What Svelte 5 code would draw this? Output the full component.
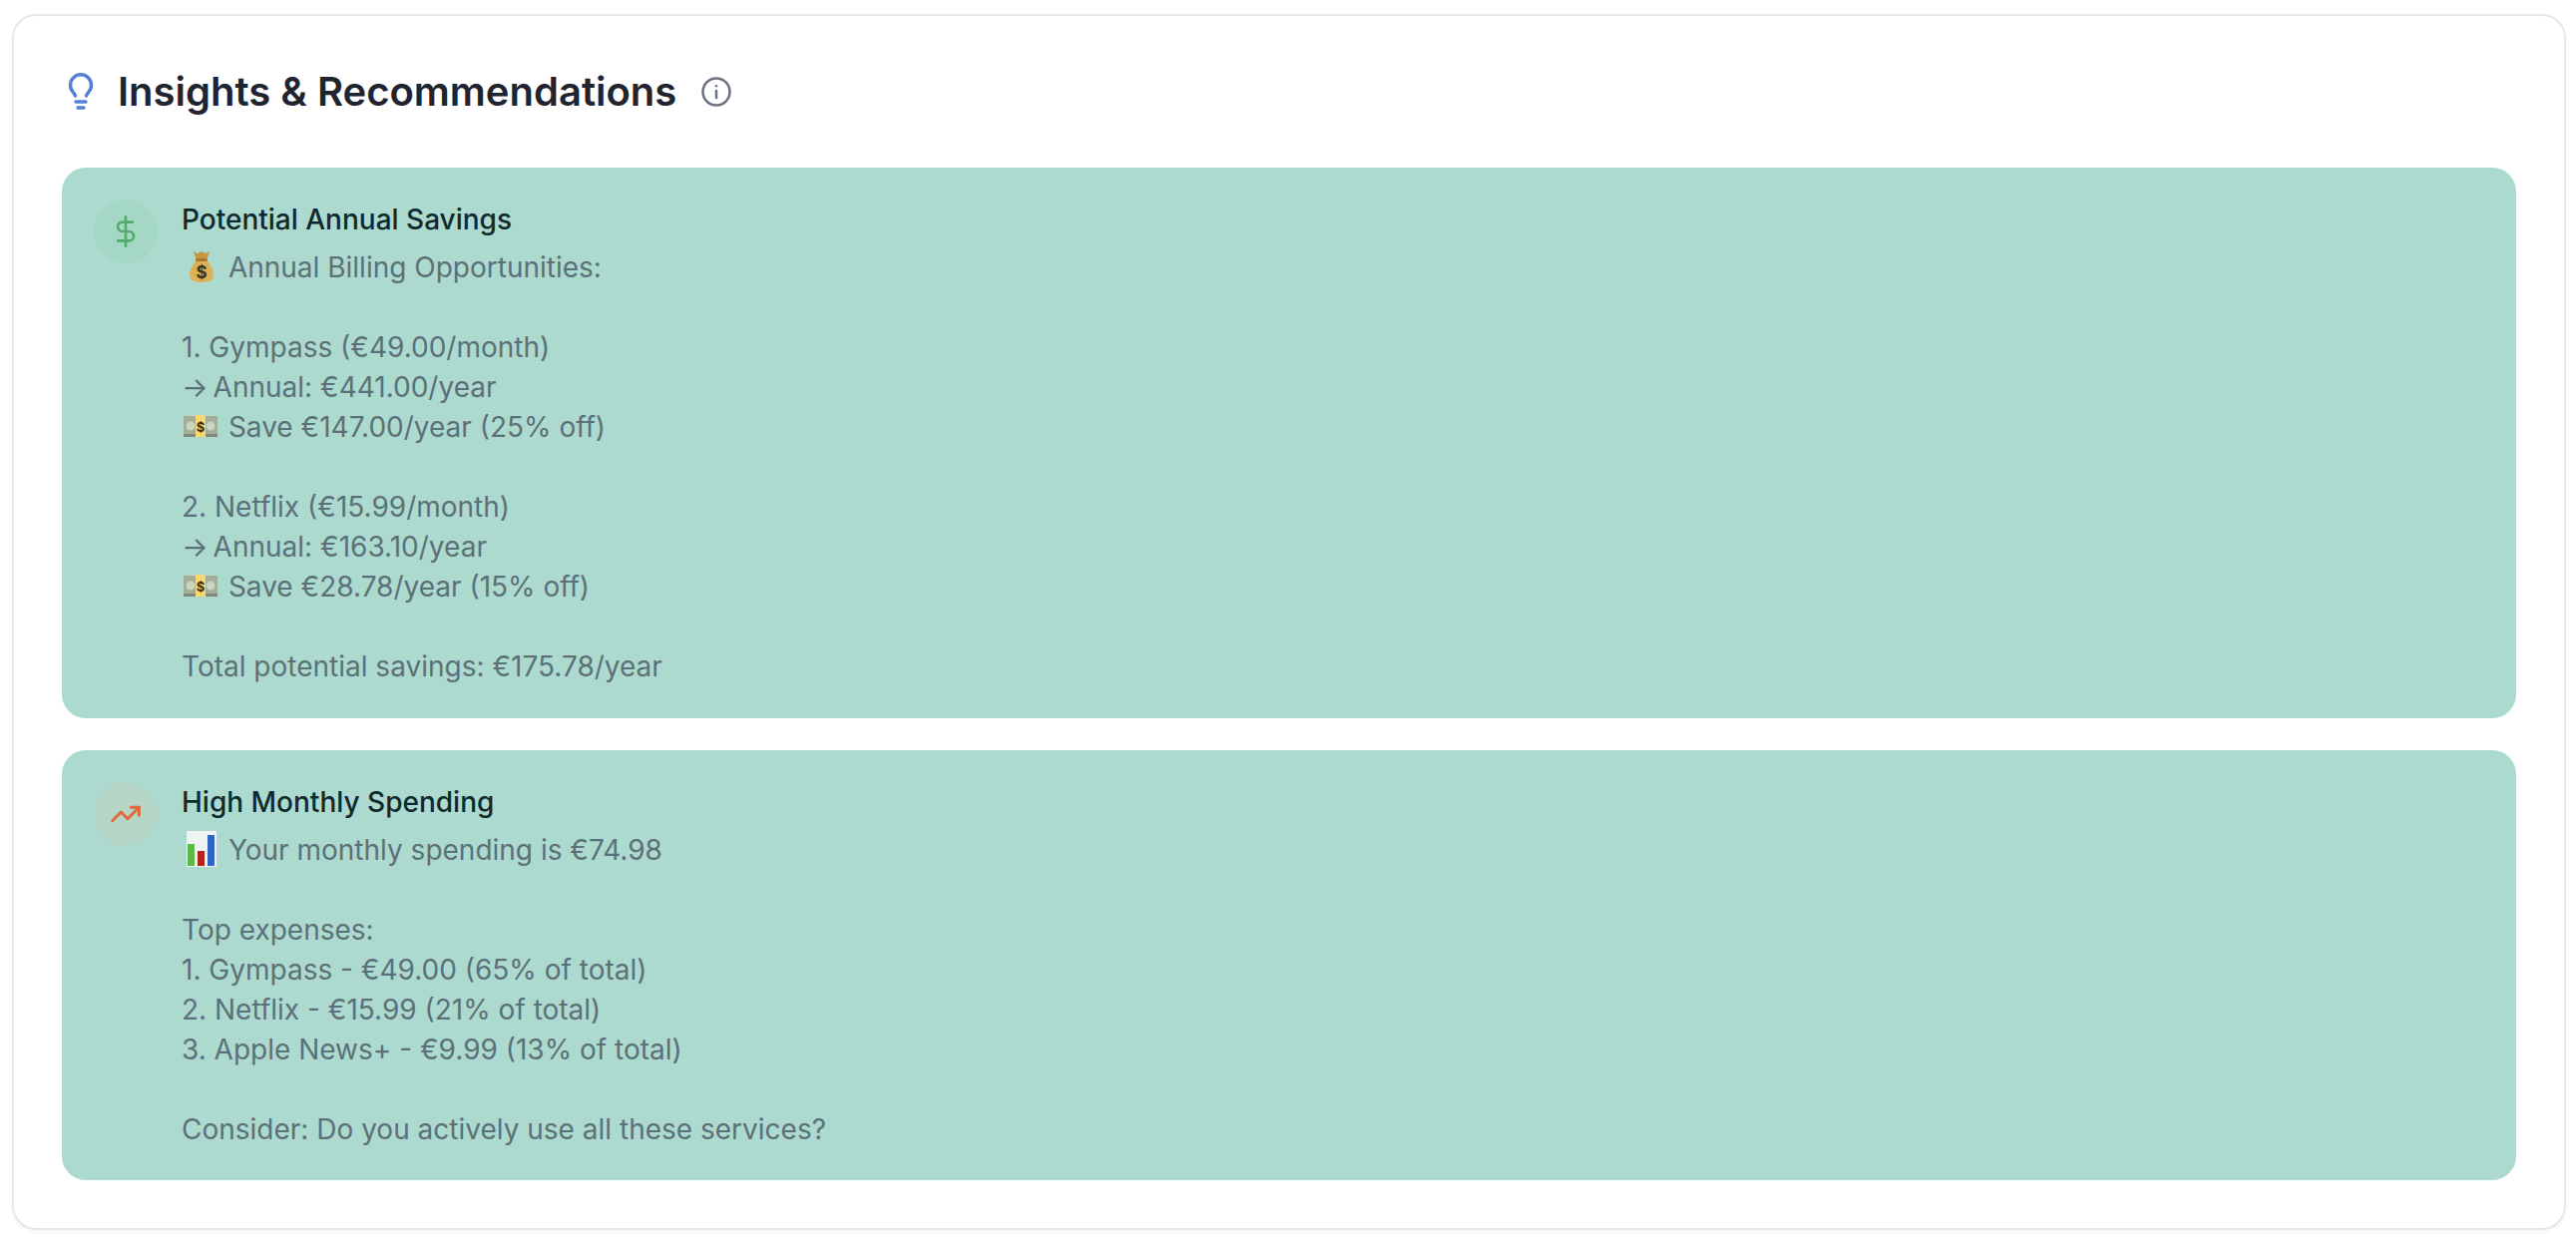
<script lang="ts">
	const insights = [
		{
			title: 'Potential Annual Savings',
			kind: 'savings',
			lines: [
				{ emoji: 'bag', text: 'Annual Billing Opportunities:' },
				{ text: '' },
				{ text: '1. Gympass (€49.00/month)' },
				{ arrow: true, text: 'Annual: €441.00/year' },
				{ emoji: 'note', text: 'Save €147.00/year (25% off)' },
				{ text: '' },
				{ text: '2. Netflix (€15.99/month)' },
				{ arrow: true, text: 'Annual: €163.10/year' },
				{ emoji: 'note', text: 'Save €28.78/year (15% off)' },
				{ text: '' },
				{ text: 'Total potential savings: €175.78/year' }
			]
		},
		{
			title: 'High Monthly Spending',
			kind: 'spending',
			lines: [
				{ emoji: 'chart', text: 'Your monthly spending is €74.98' },
				{ text: '' },
				{ text: 'Top expenses:' },
				{ text: '1. Gympass - €49.00 (65% of total)' },
				{ text: '2. Netflix - €15.99 (21% of total)' },
				{ text: '3. Apple News+ - €9.99 (13% of total)' },
				{ text: '' },
				{ text: 'Consider: Do you actively use all these services?' }
			]
		}
	];
</script>

{#snippet emoji(name: string)}
	<svg class="emoji" viewBox="0 0 39 40" aria-hidden="true">
		{#if name === 'bag'}
			<path d="M12 4l4 2 4-2 4 2 4-2-3 9h-10z" fill="#c9953f" />
			<path d="M14 13h12c1 3 6 8 6 14 0 6-4 8-12 8S8 33 8 27c0-6 5-11 6-14z" fill="#deb056" />
			<rect x="14" y="11" width="12" height="3" rx="1.500" fill="#a9762c" />
			<text x="20" y="31" text-anchor="middle" class="sign" font-size="17">$</text>
		{:else if name === 'note'}
			<rect x="2" y="9" width="34" height="20" fill="#a3ad98" />
			<rect x="2" y="27" width="34" height="3" fill="#7f8b78" />
			<circle cx="9" cy="19" r="4.500" fill="#ccd4c4" />
			<circle cx="29" cy="19" r="4.500" fill="#ccd4c4" />
			<rect x="14" y="8" width="10" height="22" fill="#f4d873" />
			<text x="19" y="24.500" text-anchor="middle" class="sign" font-size="13">$</text>
		{:else}
			<rect x="5" y="1" width="30" height="36" fill="#eef2f1" />
			<rect x="6" y="14" width="7" height="22" fill="#5cb947" />
			<rect x="16" y="21" width="7" height="15" fill="#b5241c" />
			<rect x="26" y="5" width="7" height="31" fill="#2f66c4" />
		{/if}
	</svg>
{/snippet}

<div class="page">
	<section class="panel">
		<header class="head">
			<svg class="bulb" viewBox="0 0 30 40" fill="none" stroke="currentColor" stroke-width="3.500" stroke-linecap="round" stroke-linejoin="round" aria-hidden="true">
				<path d="M9.500 24c-.4-1.800-1.300-2.800-2.400-3.800A10.500 10.500 0 1 1 22.900 20.200C21.800 21.200 20.900 22.200 20.500 24" />
				<path d="M10 30h10" />
				<path d="M12 36h6" />
			</svg>
			<h2>Insights &amp; Recommendations</h2>
			<svg class="info" viewBox="0 0 32 32" fill="none" stroke="currentColor" stroke-width="2.500" stroke-linecap="round" aria-hidden="true">
				<circle cx="16" cy="16" r="13.500" />
				<path d="M16 15v7" />
				<path d="M16 10.200v.1" />
			</svg>
		</header>

		<div class="list">
			{#each insights as item (item.title)}
				<article class="insight">
					<div class="badge {item.kind}">
						{#if item.kind === 'savings'}
							<svg viewBox="0 0 24 24" fill="none" stroke="currentColor" stroke-width="2" stroke-linecap="round" stroke-linejoin="round" aria-hidden="true">
								<path d="M12 1v22" />
								<path d="M17 5H9.500a3.500 3.500 0 0 0 0 7h5a3.500 3.500 0 0 1 0 7H6" />
							</svg>
						{:else}
							<svg viewBox="0 0 24 24" fill="none" stroke="currentColor" stroke-width="2.200" stroke-linecap="round" stroke-linejoin="round" aria-hidden="true">
								<path d="M22 7l-8.500 8.500-5-5L2 17" />
								<path d="M16 7h6v6" />
							</svg>
						{/if}
					</div>
					<div class="body">
						<h3>{item.title}</h3>
						<div class="message">
							{#each item.lines as line}
								<div class="line">{#if line.emoji}{@render emoji(line.emoji)}{' '}{/if}{#if line.arrow}<span class="arrow">→</span>{' '}{/if}{line.text}</div>
							{/each}
						</div>
					</div>
				</article>
			{/each}
		</div>
	</section>
</div>

<style>
	:global(body) { margin: 0; background: #fff; }
	.page { padding: 14px 10px 8px 12px; font-family: Inter, "Liberation Sans", sans-serif; }
	.panel { background: #fff; border: 2px solid #e5e7eb; border-radius: 24px; padding: 0 48px 48px; box-shadow: 0 2px 4px rgba(0, 0, 0, 0.04); }
	.head { display: flex; align-items: center; height: 152px; }
	.bulb { width: 30px; height: 40px; color: #5580d8; margin-left: 4px; flex: none; }
	h2 { margin: 0 0 0 22px; font-size: 40px; line-height: 56px; font-weight: 600; color: #1f2430; }
	.info { width: 32px; height: 32px; color: #6b7280; margin-left: 24px; flex: none; }
	.list { display: flex; flex-direction: column; gap: 32px; }
	.insight { display: flex; gap: 24px; padding: 32px 32px 31.5px; background: #acdacf; border-radius: 24px; }
	.badge { width: 64px; height: 64px; border-radius: 50%; display: flex; align-items: center; justify-content: center; flex: none; }
	.badge svg { width: 32px; height: 32px; }
	.badge.savings { background: #a4d7c4; color: #53ac6c; }
	.badge.spending { background: #b5d5c6; color: #e0693a; }
	.body { min-width: 0; }
	h3 { margin: 0 0 8px; font-size: 28px; line-height: 40px; font-weight: 500; color: #0f2a2e; }
	.message { font-size: 28px; line-height: 40px; color: #5c7079; }
	.line { min-height: 40px; white-space: pre-wrap; }
	.arrow { letter-spacing: -3px; }
	.emoji { width: 39px; height: 40px; vertical-align: top; }
	.sign { font-family: Inter, "Liberation Sans", sans-serif; font-weight: 700; fill: #3f3416; }
</style>
